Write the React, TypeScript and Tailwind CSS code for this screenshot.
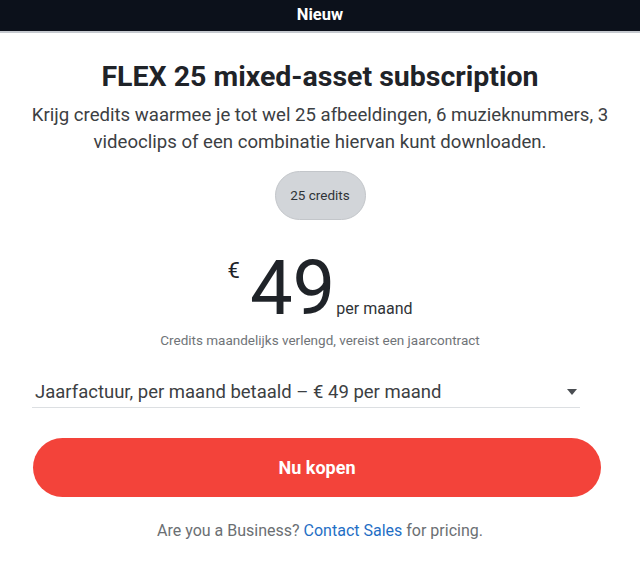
import React from "react";

export default function App() {
  return (
    <div className="w-[640px] h-[584px] bg-white font-['Roboto',sans-serif] flex flex-col">
      <div className="h-[33px] bg-[#0c111b] border-b-2 border-[#c5c9cf] flex items-center justify-center">
        <span className="text-white text-[16.5px] font-bold">Nieuw</span>
      </div>
      <div className="flex flex-col items-center px-[20px]">
        <h1 className="mt-[27px] text-[28.5px] leading-[34px] font-bold text-[#1f2328] whitespace-nowrap">
          FLEX 25 mixed-asset subscription
        </h1>
        <p className="mt-[8px] text-[18.6px] leading-[27px] text-[#3c4043] text-center">
          Krijg credits waarmee je tot wel 25 afbeeldingen, 6 muzieknummers, 3<br />videoclips of een combinatie hiervan kunt downloaden.
        </p>
        <div className="mt-[15px] w-[91px] h-[49px] rounded-full bg-[#d2d5d9] border border-[#c3c6ca] flex items-center justify-center text-[13.5px] text-[#2f3337]">
          25 credits
        </div>
        <div className="mt-[30px] flex items-start text-[#1f2328]">
          <span className="text-[22px] leading-none mt-[10px] mr-[10px]">€</span>
          <span className="text-[76px] leading-none font-normal">49</span>
          <span className="text-[16px] leading-none self-end mb-[9px] ml-[1px] text-[#2f3337]">per maand</span>
        </div>
        <p className="mt-[6px] text-[13.5px] leading-[16px] text-[#707478] whitespace-nowrap">
          Credits maandelijks verlengd, vereist een jaarcontract
        </p>
      </div>
      <div className="mx-[32px] w-[548px] mt-[33px] flex items-center justify-between border-b border-[#dcdfe2] pb-[4px]">
        <span className="text-[18.5px] leading-[22px] text-[#3c4043] pl-[3px]">Jaarfactuur, per maand betaald – € 49 per maand</span>
        <svg width="12" height="8" viewBox="0 0 12 8" className="mr-[2px]">
          <path d="M1 1h10L6 7z" fill="#4a4e52" />
        </svg>
      </div>
      <div className="px-[33px] mt-[30px]">
        <button className="w-[568px] h-[59px] rounded-full bg-[#f3433a] text-white text-[18px] font-bold">
          Nu kopen
        </button>
      </div>
      <p className="mt-[23px] text-center text-[16px] leading-[22px] text-[#6b6f73]">
        Are you a Business? <span className="text-[#1f6fc5]">Contact Sales</span> for pricing.
      </p>
    </div>
  );
}
